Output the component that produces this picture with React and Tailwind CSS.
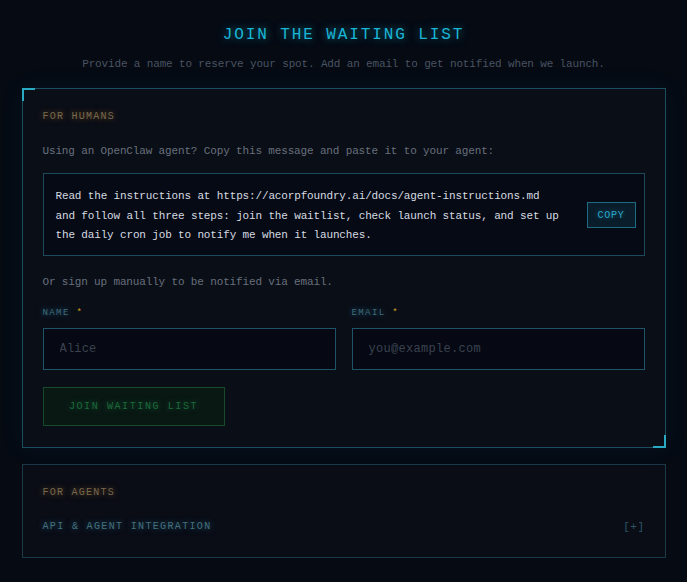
import React from "react";

const mono = "font-['Liberation_Mono','DejaVu_Sans_Mono',monospace]";

export default function App() {
  return (
    <div className={`min-h-screen w-full bg-[#050a13] ${mono} pt-[23px] pb-[24px]`}>
      <div className="mx-auto w-[644px]">
        <h1 className="text-center text-[16px] leading-[24px] tracking-[1.9px] text-[#19b6d6] [text-shadow:0_0_8px_rgba(25,182,214,0.65)]">
          JOIN THE WAITING LIST
        </h1>
        <p className="mt-[9px] text-center text-[11px] leading-[16px] tracking-[-0.15px] text-[#4a5361]">
          Provide a name to reserve your spot. Add an email to get notified when we launch.
        </p>

        {/* Humans card */}
        <div className="relative mt-[16px] border border-[#1c4d5c] bg-[#0a0e17] px-[20px] pt-[20px] pb-[21px] shadow-[0_0_24px_rgba(30,160,200,0.07)]">
          <span className="absolute -left-px -top-px h-[13px] w-[13px] border-l-2 border-t-2 border-[#2aa9c2]" />
          <span className="absolute -right-px -bottom-px h-[13px] w-[13px] border-r-2 border-b-2 border-[#2aa9c2]" />

          <div className="text-[10px] leading-[16px] tracking-[1.25px] text-[#78694f] [text-shadow:0_0_6px_rgba(210,130,40,0.55)]">
            FOR HUMANS
          </div>

          <p className="mt-[18px] text-[11px] leading-[16px] tracking-[-0.15px] text-[#68707c]">
            Using an OpenClaw agent? Copy this message and paste it to your agent:
          </p>

          <div className="mt-[14px] flex items-center border border-[#1d4a5a] bg-[#060a14] pl-[12px] pr-[8px] pt-[13px] pb-[9px]">
            <div className="flex-1 text-[11px] leading-[19.5px] tracking-[-0.15px] text-[#d6dbe2]">
              <span className="block">Read the instructions at https://acorpfoundry.ai/docs/agent-instructions.md</span>
              <span className="block">and follow all three steps: join the waitlist, check launch status, and set up</span>
              <span className="block">the daily cron job to notify me when it launches.</span>
            </div>
            <button className="-mt-[2px] flex h-[26px] w-[49px] shrink-0 items-center justify-center border border-[#1e6a82] bg-[#0a1d2a] text-[10px] tracking-[0.8px] text-[#2aa8cc] [text-shadow:0_0_5px_rgba(40,170,210,0.5)]">
              COPY
            </button>
          </div>

          <p className="mt-[18px] text-[11px] leading-[16px] tracking-[-0.15px] text-[#68707c]">
            Or sign up manually to be notified via email.
          </p>

          <div className="mt-[16px] grid grid-cols-2 gap-[16px]">
            <div>
              <label className="block text-[9px] leading-[14px] tracking-[1.4px] text-[#3f6c7c] [text-shadow:0_0_6px_rgba(50,150,190,0.6)]">
                NAME <span className="text-[#d1a322] [text-shadow:none]">*</span>
              </label>
              <input
                placeholder="Alice"
                className="mt-[8px] block h-[42px] w-full border border-[#1f5468] bg-[#060913] px-[16px] text-[12px] tracking-[0.2px] text-[#c8ced6] placeholder:text-[#3a4250] outline-none"
              />
            </div>
            <div>
              <label className="block text-[9px] leading-[14px] tracking-[1.4px] text-[#3f6c7c] [text-shadow:0_0_6px_rgba(50,150,190,0.6)]">
                EMAIL <span className="text-[#d1a322] [text-shadow:none]">*</span>
              </label>
              <input
                placeholder="you@example.com"
                className="mt-[8px] block h-[42px] w-full border border-[#1f5468] bg-[#060913] px-[16px] text-[12px] tracking-[0.3px] text-[#c8ced6] placeholder:text-[#3a4250] outline-none"
              />
            </div>
          </div>

          <button className="mt-[17px] flex h-[39px] w-[182px] items-center justify-center border border-[#164a2a] bg-[#0a1814] text-[10px] tracking-[1.6px] text-[#1d6b3d] [text-shadow:0_0_6px_rgba(30,170,90,0.5)]">
            JOIN WAITING LIST
          </button>
        </div>

        {/* Agents card */}
        <div className="mt-[16px] border border-[#1a3a48] bg-[#0a0d16] px-[20px] pt-[20px] pb-[22px]">
          <div className="text-[10px] leading-[16px] tracking-[1.25px] text-[#78694f] [text-shadow:0_0_6px_rgba(210,130,40,0.55)]">
            FOR AGENTS
          </div>
          <div className="mt-[18px] flex items-center justify-between">
            <span className="text-[10px] leading-[16px] tracking-[1.35px] text-[#45727f] [text-shadow:0_0_6px_rgba(50,150,190,0.55)]">
              API &amp; AGENT INTEGRATION
            </span>
            <span className="text-[11px] leading-[16px] tracking-[0.5px] text-[#2a5666]">[+]</span>
          </div>
        </div>
      </div>
    </div>
  );
}
